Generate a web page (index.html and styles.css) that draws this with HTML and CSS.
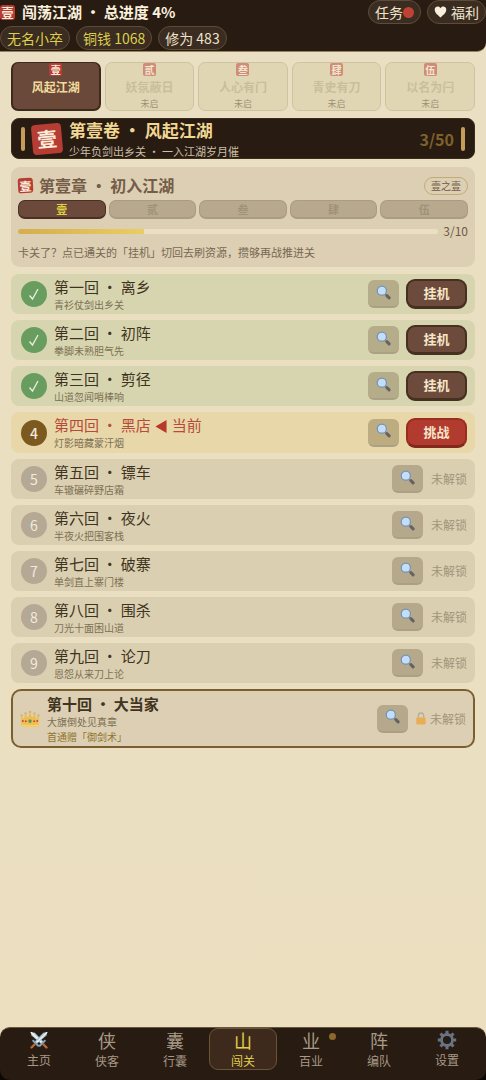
FILE: index.html
```html
<!DOCTYPE html>
<html lang="zh-CN">
<head>
<meta charset="utf-8">
<meta name="viewport" content="width=device-width, initial-scale=1">
<title>闯荡江湖</title>
<link rel="stylesheet" href="styles.css">
</head>
<body>
<svg class="sprite" aria-hidden="true">
  <symbol id="lens" viewBox="0 0 16 16">
    <path d="M9.6 9.800l1.900 1.800" stroke="#8b96a3" stroke-width="1.600"/>
    <path d="M11.600 11.300l2.400 2.400" stroke="#646262" stroke-width="3.200" stroke-linecap="round"/>
    <circle cx="6.200" cy="6" r="4.900" fill="#c3def8" stroke="#7592b4" stroke-width="1.300"/>
  </symbol>
</svg>
<div class="app">
  <header class="top">
    <div class="top-row">
      <span class="seal seal-sm">壹</span>
      <h1 class="top-title">闯荡江湖 · 总进度 4%</h1>
      <button class="chip" type="button">任务<i class="alert"></i></button>
      <button class="chip chip-end" type="button"><svg class="heart" viewBox="0 0 12 12"><path d="M6 11.600C4.800 10 .2 7.400.2 3.800.2.300 4.600-.6 6 2.200 7.400-.6 11.800.3 11.800 3.800 11.800 7.400 7.200 10 6 11.600z" fill="#f8eedb"/></svg>福利</button>
    </div>
    <div class="stats">
      <span class="chip gold">无名小卒</span>
      <span class="chip gold">铜钱 1068</span>
      <span class="chip">修为 483</span>
    </div>
  </header>

  <main class="main">
    <nav class="volumes">
      <button class="volume on" type="button"><span class="seal seal-xs">壹</span><span class="volume-name">风起江湖</span><span class="volume-dot"></span></button>
      <button class="volume" type="button" disabled><span class="seal seal-xs">贰</span><span class="volume-name">妖氛蔽日</span><span class="volume-note">未启</span></button>
      <button class="volume" type="button" disabled><span class="seal seal-xs">叁</span><span class="volume-name">人心有门</span><span class="volume-note">未启</span></button>
      <button class="volume" type="button" disabled><span class="seal seal-xs">肆</span><span class="volume-name">青史有刀</span><span class="volume-note">未启</span></button>
      <button class="volume" type="button" disabled><span class="seal seal-xs">伍</span><span class="volume-name">以名为闩</span><span class="volume-note">未启</span></button>
    </nav>

    <section class="banner">
      <i class="rod"></i>
      <span class="seal seal-lg">壹</span>
      <div class="banner-text">
        <h2 class="banner-title">第壹卷 · 风起江湖</h2>
        <p class="banner-sub">少年负剑出乡关 · 一入江湖岁月催</p>
      </div>
      <strong class="banner-count">3/50</strong>
      <i class="rod"></i>
    </section>

    <section class="chapter">
      <div class="chapter-head">
        <span class="seal seal-sm tilt">壹</span>
        <h3 class="chapter-title">第壹章 · 初入江湖</h3>
        <span class="tag">壹之壹</span>
      </div>
      <div class="parts">
        <button class="part on" type="button">壹</button>
        <button class="part" type="button" disabled>贰</button>
        <button class="part" type="button" disabled>叁</button>
        <button class="part" type="button" disabled>肆</button>
        <button class="part" type="button" disabled>伍</button>
      </div>
      <div class="progress">
        <div class="track"><div class="fill" style="width:30%"></div></div>
        <span class="progress-count">3/10</span>
      </div>
      <p class="hint">卡关了？点已通关的「挂机」切回去刷资源，攒够再战推进关</p>
    </section>

    <ul class="stages">
      <li class="stage done">
        <span class="num"><svg class="check" viewBox="0 0 12 14"><path d="M1.500 8.500L4.500 12 10 2" /></svg></span>
        <div class="info"><h4 class="name">第一回 · 离乡</h4><p class="verse">青衫仗剑出乡关</p></div>
        <button class="look" type="button" aria-label="查看"><svg class="lens"><use href="#lens"/></svg></button>
        <button class="act" type="button">挂机</button>
      </li>
      <li class="stage done">
        <span class="num"><svg class="check" viewBox="0 0 12 14"><path d="M1.500 8.500L4.500 12 10 2" /></svg></span>
        <div class="info"><h4 class="name">第二回 · 初阵</h4><p class="verse">拳脚未熟胆气先</p></div>
        <button class="look" type="button" aria-label="查看"><svg class="lens"><use href="#lens"/></svg></button>
        <button class="act" type="button">挂机</button>
      </li>
      <li class="stage done">
        <span class="num"><svg class="check" viewBox="0 0 12 14"><path d="M1.500 8.500L4.500 12 10 2" /></svg></span>
        <div class="info"><h4 class="name">第三回 · 剪径</h4><p class="verse">山道忽闻哨棒响</p></div>
        <button class="look" type="button" aria-label="查看"><svg class="lens"><use href="#lens"/></svg></button>
        <button class="act" type="button">挂机</button>
      </li>
      <li class="stage current">
        <span class="num">4</span>
        <div class="info"><h4 class="name">第四回 · 黑店<svg class="arrow" viewBox="0 0 12 14"><path d="M12 0v14L0 7z" fill="#b53a2c"/></svg>当前</h4><p class="verse">灯影暗藏蒙汗烟</p></div>
        <button class="look" type="button" aria-label="查看"><svg class="lens"><use href="#lens"/></svg></button>
        <button class="act fight" type="button">挑战</button>
      </li>
      <li class="stage">
        <span class="num">5</span>
        <div class="info"><h4 class="name">第五回 · 镖车</h4><p class="verse">车辙碾碎野店霜</p></div>
        <button class="look" type="button" aria-label="查看"><svg class="lens"><use href="#lens"/></svg></button>
        <span class="locked">未解锁</span>
      </li>
      <li class="stage">
        <span class="num">6</span>
        <div class="info"><h4 class="name">第六回 · 夜火</h4><p class="verse">半夜火把围客栈</p></div>
        <button class="look" type="button" aria-label="查看"><svg class="lens"><use href="#lens"/></svg></button>
        <span class="locked">未解锁</span>
      </li>
      <li class="stage">
        <span class="num">7</span>
        <div class="info"><h4 class="name">第七回 · 破寨</h4><p class="verse">单剑直上寨门楼</p></div>
        <button class="look" type="button" aria-label="查看"><svg class="lens"><use href="#lens"/></svg></button>
        <span class="locked">未解锁</span>
      </li>
      <li class="stage">
        <span class="num">8</span>
        <div class="info"><h4 class="name">第八回 · 围杀</h4><p class="verse">刀光十面困山道</p></div>
        <button class="look" type="button" aria-label="查看"><svg class="lens"><use href="#lens"/></svg></button>
        <span class="locked">未解锁</span>
      </li>
      <li class="stage">
        <span class="num">9</span>
        <div class="info"><h4 class="name">第九回 · 论刀</h4><p class="verse">恩怨从来刀上论</p></div>
        <button class="look" type="button" aria-label="查看"><svg class="lens"><use href="#lens"/></svg></button>
        <span class="locked">未解锁</span>
      </li>
      <li class="stage boss">
        <svg class="crown" viewBox="0 0 20 18">
          <path d="M1.500 16L1.200 6l2.600 3L5.500 4l2.300 4L10 2.500 12.200 8l2.300-4 1.700 5 2.600-3-.3 10q-8.500 1.500-17 0z" fill="#ecbb52"/>
          <path d="M1.400 8.500h17.200L18.500 16q-8.500 1.500-17 0z" fill="#f0bf52"/>
          <g fill="#d8b36c"><circle cx="1.600" cy="5.500" r="1.200"/><circle cx="5.500" cy="3.500" r="1.200"/><circle cx="10" cy="2" r="1.300"/><circle cx="14.500" cy="3.500" r="1.200"/><circle cx="18.400" cy="5.500" r="1.200"/></g>
          <path d="M1.600 15.200q8.400 1.500 16.800 0" fill="none" stroke="#f8d467" stroke-width="1.500"/>
          <rect x="8.500" y="9.500" width="3" height="3.200" rx=".8" fill="#4f9a56"/>
          <g fill="#c4483c"><circle cx="2.800" cy="11" r="1"/><circle cx="17.200" cy="11" r="1"/><circle cx="14.200" cy="11.200" r="1"/><circle cx="5.800" cy="11.200" r="1"/></g>
        </svg>
        <div class="info"><h4 class="name">第十回 · 大当家</h4><p class="verse">大旗倒处见真章</p><p class="verse reward">首通赠「御剑术」</p></div>
        <button class="look" type="button" aria-label="查看"><svg class="lens"><use href="#lens"/></svg></button>
        <span class="locked"><svg class="lock" viewBox="0 0 10 13"><path d="M2.300 6V3.700a2.700 2.700 0 0 1 5.400 0V6" fill="none" stroke="#b7ad98" stroke-width="1.300"/><rect x=".3" y="5.500" width="9.400" height="7" rx="1.300" fill="#e8ad55"/></svg>未解锁</span>
      </li>
    </ul>
  </main>

  <footer class="foot">
    <nav class="tabs">
      <a class="tab" href="#home"><span class="glyph"><svg class="icon" viewBox="0 0 20 20">
        <path d="M1.500 2l4.300.8 9 9.200-2.200 2.200L2.500 5.500z" fill="#b9d0dc"/><path d="M2 2.300l11.600 11.200" stroke="#f0f7fa" stroke-width="1.400"/>
        <path d="M18.500 2l-4.300.8-9 9.200 2.200 2.200L17.500 5.500z" fill="#9fbccb"/><path d="M18 2.300L6.400 13.500" stroke="#eef5f8" stroke-width="1.400"/>
        <path d="M10.800 15.800l5-5M9.200 15.800l-5-5" stroke="#86a3b2" stroke-width="2" stroke-linecap="round"/>
        <path d="M14.500 14.500l3 3M5.500 14.500l-3 3" stroke="#b9693d" stroke-width="2.400" stroke-linecap="round"/>
      </svg></span>主页</a>
      <a class="tab" href="#heroes"><span class="glyph">侠</span>侠客</a>
      <a class="tab" href="#bag"><span class="glyph">囊</span>行囊</a>
      <a class="tab on" href="#stages"><span class="glyph">山</span>闯关</a>
      <a class="tab" href="#trades"><span class="glyph">业</span>百业<i class="badge"></i></a>
      <a class="tab" href="#team"><span class="glyph">阵</span>编队</a>
      <a class="tab" href="#settings"><span class="glyph"><svg class="icon" viewBox="0 0 20 20">
        <circle cx="10" cy="10" r="5.500" fill="none" stroke="#687482" stroke-width="2.800"/>
        <path d="M10 .8v3M10 16.200v3M.8 10h3M16.200 10h3M3.500 3.500l2.100 2.100M14.400 14.400l2.100 2.100M3.500 16.500l2.100-2.100M14.400 5.600l2.100-2.100" stroke="#687482" stroke-width="3"/>
      </svg></span>设置</a>
    </nav>
  </footer>
</div>
</body>
</html>
```
FILE: styles.css
```css
* { box-sizing: border-box; }
body {
  margin: 0;
  background: #0b0805;
  color: #403420;
  font-family: "Noto Sans CJK SC", sans-serif;
  font-size: 12px;
}
h1, h2, h3, h4, p, ul { margin: 0; padding: 0; }
button { margin: 0; padding: 0; font: inherit; color: inherit; border: 0; background: none; }
a { color: inherit; text-decoration: none; }
.sprite { position: absolute; width: 0; height: 0; }

.app {
  min-height: 100vh;
  display: flex;
  flex-direction: column;
  background: linear-gradient(#eadfc2, #ebdfc0);
}

/* header */
.top {
  display: flex;
  flex-direction: column;
  gap: 2px;
  padding-bottom: 1px;
  background: #281b12;
  border-bottom: 1px solid #95815a;
  border-bottom-right-radius: 9px;
}
.top-row { display: flex; align-items: center; gap: 6px; }
.top-title { flex: 1; padding-left: 1px; font-size: 15px; line-height: 24px; font-weight: 700; color: #faf0dc; }
.stats { display: flex; gap: 6px; }
.chip {
  display: flex;
  align-items: center;
  height: 24px;
  padding: 0 6px;
  border: 1px solid #5d4d37;
  border-radius: 12px;
  background: #3a2c20;
  color: #efe3cc;
  font-size: 14px;
  line-height: 22px;
}
.chip.gold { color: #ded04e; }
.alert { width: 11px; height: 11px; border-radius: 50%; background: #bd4236; }
.heart { width: 13px; height: 12px; margin-right: 4px; }

/* seals */
.seal {
  display: flex;
  align-items: center;
  justify-content: center;
  flex: none;
  background: #b53d33;
  color: #fbeedd;
  font-weight: 700;
}
.seal-xs { width: 13px; height: 13px; border-radius: 2px; font-size: 10px; line-height: 13px; }
.seal-sm { width: 15px; height: 15px; border-radius: 3px; font-size: 12px; line-height: 15px; }
.seal-lg { width: 30px; height: 30px; border-radius: 4px; font-size: 20px; line-height: 30px; transform: rotate(-5deg); }
.tilt { transform: rotate(-3deg); }

.main { flex: 1; padding: 10px 11px; }

/* volume tabs */
.volumes { display: grid; grid-template-columns: repeat(5, 1fr); gap: 4px; }
.volume {
  display: flex;
  flex-direction: column;
  align-items: center;
  height: 49px;
  border: 1px solid #b4ab83;
  border-radius: 7px;
  background: #d8cfa6;
  opacity: .5;
}
.volume.on { opacity: 1; background: #6a493b; border: 2px solid #3e291d; border-top-width: 1px; color: #f3dc9d; }
.volume-name { margin-top: 3px; font-size: 12px; line-height: 16px; font-weight: 700; color: #ab9d7b; }
.on .volume-name { color: inherit; }
.volume-note { margin-top: 2px; font-size: 9px; line-height: 13px; color: #4e452b; }
.volume-dot { width: 8px; height: 6px; margin-top: 4px; border-radius: 50%; background: #70492f; }

/* banner */
.banner {
  display: flex;
  align-items: center;
  gap: 7px;
  height: 41px;
  margin-top: 7px;
  padding: 0 9px;
  border: 1px solid #3b2c19;
  border-radius: 8px;
  background: #281b12;
  overflow: hidden;
}
.rod { flex: none; width: 4px; height: 24px; border-radius: 2px; background: #c59d58; }
.banner-text { flex: 1; padding-top: 4px; }
.banner-title { font-size: 17px; line-height: 20px; font-weight: 700; color: #f0d792; }
.banner-sub { font-size: 11px; line-height: 22px; color: #cabfa9; }
.banner-count { font-size: 16px; line-height: 20px; color: #80602c; }

/* chapter card */
.chapter { margin-top: 8px; padding: 8px 7px 5px; border-radius: 9px; background: #dccfb3; }
.chapter-head { display: flex; align-items: center; gap: 6px; }
.chapter-title { flex: 1; font-size: 16px; line-height: 21px; font-weight: 700; color: #755c48; }
.tag { padding: 0 6px; border: 1px solid #c2ac76; border-radius: 9px; font-size: 10px; line-height: 16px; color: #705b43; }
.parts { display: grid; grid-template-columns: repeat(5, 1fr); gap: 3px; margin-top: 4px; }
.part {
  height: 19px;
  border: 1px solid #aa9c83;
  border-bottom-width: 2px;
  border-radius: 7px;
  background: #b8a98e;
  color: #a0917a;
  font-size: 11px;
  line-height: 15px;
  font-weight: 700;
}
.part.on { background: #6b4a3c; border-color: #4a2f25; color: #dfd23e; }
.progress { display: flex; align-items: center; gap: 5px; margin-top: 3px; }
.track { flex: 1; height: 5px; border-radius: 3px; background: #ecdfc1; overflow: hidden; }
.fill { height: 100%; background: linear-gradient(90deg, #d5ae4d, #e9cd64); }
.progress-count { font-size: 12px; line-height: 18px; color: #705a44; }
.hint { margin-top: 2px; font-size: 11px; line-height: 20px; color: #786752; }

/* stages */
.stages { display: flex; flex-direction: column; gap: 6px; margin-top: 7px; list-style: none; }
.stage {
  display: flex;
  align-items: center;
  gap: 7px;
  min-height: 40px;
  padding: 0 8px 0 10px;
  border-radius: 8px;
  background: #dacfb1;
}
.stage.done { background: #d7d5b0; }
.stage.current { min-height: 41px; background: #e8d7a9; }
.num {
  display: flex;
  align-items: center;
  justify-content: center;
  flex: none;
  width: 26px;
  height: 26px;
  border-radius: 50%;
  background: #b5a995;
  color: #f2eadb;
  font-size: 14px;
  line-height: 26px;
}
.done .num { background: #699d60; }
.current .num { background: #7c591f; font-weight: 500; }
.check { width: 12px; height: 14px; fill: none; stroke: #e8f2dd; stroke-width: 1.3px; }
.info { flex: 1; }
.name { font-size: 15px; line-height: 20px; font-weight: 400; color: #403420; }
.verse { font-size: 10px; line-height: 15px; color: #7d7054; }
.current .name { color: #b64b39; }
.arrow { width: 12px; height: 13px; margin: 0 5px 0 4px; vertical-align: -2px; }
.look {
  display: flex;
  align-items: center;
  justify-content: center;
  flex: none;
  width: 31px;
  height: 28px;
  padding-bottom: 2px;
  border-radius: 6px;
  border-bottom: 2px solid #aca084;
  background: #b5a88b;
}
.done .look { background: #b5ad89; }
.current .look { background: #beac81; }
.lens { width: 15px; height: 15px; }
.act {
  flex: none;
  width: 61px;
  height: 30px;
  padding-bottom: 2px;
  border: 2px solid #47301f;
  border-bottom-width: 3px;
  border-radius: 9px;
  background: #6c4b3c;
  color: #f6e5c8;
  font-size: 13px;
  line-height: 23px;
  font-weight: 700;
}
.fight { background: #b23b30; border-color: #9b2c22; border-bottom-color: #82291e; }
.locked { display: flex; align-items: center; gap: 4px; margin-left: 1px; font-size: 12px; line-height: 18px; color: #a1957a; }
.lock { width: 10px; height: 13px; }

.boss { min-height: 59px; padding: 0 7px; border: 2px solid #7a6030; border-radius: 10px; background: #dccfb3; }
.crown { flex: none; width: 20px; height: 18px; }
.boss .name { line-height: 21px; font-weight: 700; }
.boss .reward { color: #8f742f; }

/* bottom navigation */
.foot { background: linear-gradient(#ebdfc0 50%, #0b0805 50%); }
.tabs {
  display: grid;
  grid-template-columns: repeat(7, 1fr);
  padding: 0 5px 10px;
  border-top: 1px solid #6a563b;
  border-radius: 10px;
  background: #281b12;
}
.tab {
  position: relative;
  display: flex;
  flex-direction: column;
  align-items: center;
  height: 42px;
  border: 1px solid transparent;
  border-radius: 9px;
  color: #a69986;
  font-size: 12px;
  line-height: 18px;
}
.tab.on { border-color: #6a5438; background: #3d2a1d; color: #e0cf48; }
.glyph { display: flex; align-items: center; height: 23px; font-size: 18px; line-height: 23px; }
.icon { width: 20px; height: 20px; }
.badge { position: absolute; top: 4px; right: 8px; width: 7px; height: 7px; border-radius: 50%; background: #8d672b; }
```
